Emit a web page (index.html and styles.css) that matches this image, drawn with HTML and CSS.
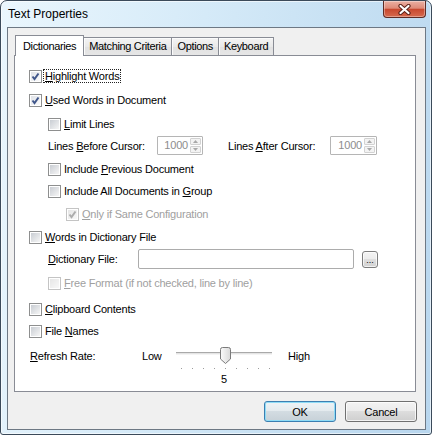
FILE: index.html
```html
<!DOCTYPE html>
<html>
<head>
<meta charset="utf-8">
<title>Text Properties</title>
<link rel="stylesheet" href="styles.css">
</head>
<body>
<div class="window">
  <div class="titlebar">
    <span class="title">Text Properties</span>
    <div class="close-btn">
      <svg width="13" height="11" viewBox="0 0 13 11">
        <path class="x-outline" d="M2.5 2 L10.5 9 M10.5 2 L2.5 9"/>
        <path class="x-fill" d="M2.5 2 L10.5 9 M10.5 2 L2.5 9"/>
      </svg>
    </div>
  </div>
  <div class="client">
    <div class="tabs">
      <div class="tab active">Dictionaries</div>
      <div class="tab">Matching Criteria</div>
      <div class="tab">Options</div>
      <div class="tab">Keyboard</div>
    </div>
    <div class="panel">
      <div class="row">
        <span class="cb on"><svg viewBox="0 0 9 9"><path d="M1.5 4.5 L3.5 7 L7.5 1.5"/></svg></span>
        <span class="focus"><u>H</u>ighlight Words</span>
      </div>
      <div class="row gap4">
        <span class="cb on"><svg viewBox="0 0 9 9"><path d="M1.5 4.5 L3.5 7 L7.5 1.5"/></svg></span>
        <span><u>U</u>sed Words in Document</span>
      </div>
      <div class="row gap4 ind1">
        <span class="cb"></span>
        <span><u>L</u>imit Lines</span>
      </div>
      <div class="row spinrow gap1 ind1">
        <span class="lbl-before">Lines <u>B</u>efore Cursor:</span>
        <span class="spin">
          <span class="spin-val">1000</span>
          <span class="spin-btns">
            <span><svg width="5" height="3" viewBox="0 0 5 3"><path d="M0 3 L2.5 0 L5 3 Z"/></svg></span>
            <span><svg width="5" height="3" viewBox="0 0 5 3"><path d="M0 0 L2.5 3 L5 0 Z"/></svg></span>
          </span>
        </span>
        <span class="lbl-after">Lines <u>A</u>fter Cursor:</span>
        <span class="spin">
          <span class="spin-val">1000</span>
          <span class="spin-btns">
            <span><svg width="5" height="3" viewBox="0 0 5 3"><path d="M0 3 L2.5 0 L5 3 Z"/></svg></span>
            <span><svg width="5" height="3" viewBox="0 0 5 3"><path d="M0 0 L2.5 3 L5 0 Z"/></svg></span>
          </span>
        </span>
      </div>
      <div class="row ind1">
        <span class="cb"></span>
        <span>Include <u>P</u>revious Document</span>
      </div>
      <div class="row gap2 ind1">
        <span class="cb"></span>
        <span>Include All Documents in <u>G</u>roup</span>
      </div>
      <div class="row ind2 disabled">
        <span class="cb on dis"><svg viewBox="0 0 9 9"><path d="M1.5 4.5 L3.5 7 L7.5 1.5"/></svg></span>
        <span><u>O</u>nly if Same Configuration</span>
      </div>
      <div class="row">
        <span class="cb"></span>
        <span><u>W</u>ords in Dictionary File</span>
      </div>
      <div class="row gap2 ind1">
        <span class="lbl-dict"><u>D</u>ictionary File:</span>
        <span class="textbox"></span>
        <span class="browse">...</span>
      </div>
      <div class="row gap4 ind1 disabled">
        <span class="cb dis"></span>
        <span><u>F</u>ree Format (if not checked, line by line)</span>
      </div>
      <div class="row gap6">
        <span class="cb"></span>
        <span><u>C</u>lipboard Contents</span>
      </div>
      <div class="row gap2">
        <span class="cb"></span>
        <span>File <u>N</u>ames</span>
      </div>
      <div class="row refresh gap5">
        <span class="lbl-refresh"><u>R</u>efresh Rate:</span>
        <span class="lbl-low">Low</span>
        <div class="slider">
          <div class="slider-rail">
            <div class="track"></div>
            <svg class="thumb" width="11" height="17" viewBox="0 0 11 17">
              <defs>
                <linearGradient id="tg" x1="0" y1="0" x2="1" y2="0">
                  <stop offset="0" stop-color="#fbfbfb"/>
                  <stop offset="1" stop-color="#d9d9d9"/>
                </linearGradient>
              </defs>
              <path d="M0.5 2.5 Q0.5 0.5 2.5 0.5 H8.5 Q10.5 0.5 10.5 2.5 V12 L5.5 16.5 L0.5 12 Z" fill="url(#tg)" stroke="#7a7a7a"/>
            </svg>
          </div>
          <div class="ticks"><i></i><i></i><i></i><i></i><i></i><i></i><i></i><i></i><i></i></div>
          <div class="slider-val">5</div>
        </div>
        <span class="lbl-high">High</span>
      </div>
    </div>
    <div class="buttons">
      <button class="btn default">OK</button>
      <button class="btn">Cancel</button>
    </div>
  </div>
</div>
</body>
</html>
```

FILE: styles.css
```css
* { box-sizing: border-box; }

body {
  margin: 0;
  background: #fff;
  font-family: "Liberation Sans", Arial, sans-serif;
  font-size: 11px;
  letter-spacing: -0.2px;
  color: #000;
}

u { text-decoration: underline; text-underline-offset: 1px; }

.window {
  width: 432px;
  height: 435px;
  border: 1px solid #3b4a5a;
  border-radius: 7px 7px 3px 3px;
  background: linear-gradient(100deg, #eaf6fd 0%, #d8ecf9 35%, #c6e0f3 70%, #b8d6ee 100%);
  box-shadow: inset 0 0 0 1px rgba(255, 255, 255, 0.6);
  display: flex;
  flex-direction: column;
}

.titlebar {
  height: 26px;
  display: flex;
  align-items: flex-start;
}

.title {
  font-size: 12px;
  letter-spacing: 0;
  line-height: 26px;
  padding-left: 7px;
}

.close-btn {
  margin-left: auto;
  margin-right: 5px;
  width: 43px;
  height: 17px;
  border: 1px solid #5e2b24;
  border-top: none;
  border-radius: 0 0 4px 4px;
  background: linear-gradient(#eab0a3 0%, #de8a78 45%, #c8482f 52%, #d66a4e 100%);
  box-shadow: inset 0 0 0 1px rgba(255, 255, 255, 0.35);
  display: flex;
  align-items: center;
  justify-content: center;
}

.close-btn svg { display: block; }
.x-outline { stroke: #5a2118; stroke-width: 4.2; stroke-linecap: round; fill: none; }
.x-fill { stroke: #fff; stroke-width: 2.2; stroke-linecap: round; fill: none; }

.client {
  margin: 0 5px 4px 6px;
  flex: 1;
  border: 1px solid #6d7884;
  background: #f0f0f0;
  padding: 7px 8px 7px 6px;
  display: flex;
  flex-direction: column;
}

.tabs {
  display: flex;
  align-items: flex-end;
  height: 20px;
  margin-left: 1px;
  position: relative;
  z-index: 1;
  letter-spacing: -0.35px;
}

.tab {
  height: 18px;
  border: 1px solid #898c95;
  border-bottom: none;
  background: linear-gradient(#f4f4f4, #e9e9e9 50%, #e1e1e1 51%, #e6e6e6);
  box-shadow: inset 1px 1px 0 #fbfbfb;
  padding: 0 5px;
  line-height: 17px;
  margin-left: -1px;
  white-space: nowrap;
}

.tab.active {
  height: 21px;
  margin-left: 0;
  margin-bottom: -1px;
  background: #fff;
  box-shadow: none;
  padding: 0 7px;
  line-height: 20px;
  position: relative;
  z-index: 2;
}

.panel {
  width: 402px;
  height: 337px;
  border: 1px solid #898c95;
  background: #fff;
  padding: 10px 0 0 14px;
  display: flex;
  flex-direction: column;
}

.row {
  display: flex;
  align-items: center;
  height: 20px;
  margin-top: 3px;
  white-space: nowrap;
}

.row:first-child { margin-top: 0; }
.gap1 { margin-top: 1px; }
.gap2 { margin-top: 2px; }
.gap4 { margin-top: 4px; }
.gap5 { margin-top: 5px; }
.gap6 { margin-top: 6px; }
.ind1 { padding-left: 19px; }
.ind2 { padding-left: 37px; }

.disabled { color: #a0a0a0; }

.cb {
  flex: none;
  width: 13px;
  height: 13px;
  margin-right: 3px;
  border: 1px solid #8e8f8f;
  padding: 1px;
  background: linear-gradient(135deg, #c9cdd3, #f6f6f6) content-box, #fff;
}

.cb.on { background: linear-gradient(135deg, #dfe2e7, #fbfbfb) content-box, #fff; }
.cb svg { display: block; width: 9px; height: 9px; }
.cb path { fill: none; stroke: #40568a; stroke-width: 2; }
.cb.dis { border-color: #c4c4c4; background: linear-gradient(135deg, #e6e6e6, #f8f8f8) content-box, #fff; }
.cb.dis path { stroke: #adadad; }

.focus {
  margin-left: -2px;
  padding: 0 1px;
  border: 1px dotted #222;
  line-height: 12px;
}

.spinrow { height: 21px; }
.lbl-before { width: 109px; }
.lbl-after { width: 102px; margin-left: 25px; }

.spin {
  width: 46px;
  height: 19px;
  border: 1px solid #b5b5b5;
  border-radius: 1px;
  background: #fff;
  color: #8d8d8d;
  display: flex;
}

.lbl-after + .spin { width: 47px; }

.spin-val {
  flex: 1;
  text-align: right;
  padding-right: 2px;
  line-height: 17px;
}

.spin-btns {
  width: 12px;
  display: flex;
  flex-direction: column;
  gap: 1px;
  padding: 1px 1px 1px 0;
}

.spin-btns span {
  flex: 1;
  display: flex;
  align-items: center;
  justify-content: center;
  border: 1px solid #d2d2d2;
  border-radius: 1px;
  background: #f3f3f3;
}

.spin-btns svg { display: block; }
.spin-btns path { fill: #a8a8a8; }

.lbl-dict { width: 90px; }

.textbox {
  width: 216px;
  height: 20px;
  border: 1px solid #acacac;
  border-radius: 2px;
  background: #fff;
}

.browse {
  width: 16px;
  height: 17px;
  margin-left: 8px;
  border: 1px solid #7d7d7d;
  border-radius: 3px;
  background: linear-gradient(#f4f4f4 0%, #ececec 49%, #dedede 50%, #d2d2d2 100%);
  box-shadow: inset 0 0 0 1px rgba(255, 255, 255, 0.7);
  font-size: 9px;
  letter-spacing: 0;
  line-height: 16px;
  text-align: center;
}

.refresh {
  height: auto;
  align-items: flex-start;
  line-height: 20px;
}

.lbl-refresh { width: 112px; margin-left: 1px; }
.lbl-low { width: 28px; }
.lbl-high { margin-left: 10px; }

.slider {
  width: 108px;
  display: flex;
  flex-direction: column;
}

.slider-rail {
  height: 20px;
  position: relative;
}

.track {
  margin: 6px 6px 0 6px;
  height: 3px;
  border-top: 1px solid #a9a9a9;
  border-bottom: 1px solid #f4f4f4;
  background: #e4e4e4;
}

.thumb {
  position: absolute;
  left: 50px;
  top: 1px;
  display: block;
}

.ticks {
  display: flex;
  justify-content: space-between;
  height: 1px;
  margin: 2px 8px 0 11px;
}

.ticks i {
  width: 1px;
  height: 1px;
  background: #9c9c9c;
}

.slider-val {
  text-align: center;
  line-height: 12px;
  margin-top: 4px;
}

.buttons {
  display: flex;
  justify-content: flex-end;
  gap: 9px;
  margin-top: 9px;
}

.btn {
  width: 72px;
  height: 21px;
  padding: 0;
  border: 1px solid #707070;
  border-radius: 3px;
  background: linear-gradient(#f3f3f3 0%, #ebebeb 49%, #dddddd 50%, #cfcfcf 100%);
  box-shadow: inset 0 0 0 1px rgba(255, 255, 255, 0.75);
  font-family: inherit;
  font-size: 11px;
  letter-spacing: -0.2px;
  color: #000;
}

.btn.default {
  border-color: #3c7fb1;
  background: linear-gradient(#eef3f6 0%, #e3eaee 49%, #d3dce2 50%, #c7d1d8 100%);
  box-shadow: inset 0 0 0 1px #8fdcf6;
}
```
